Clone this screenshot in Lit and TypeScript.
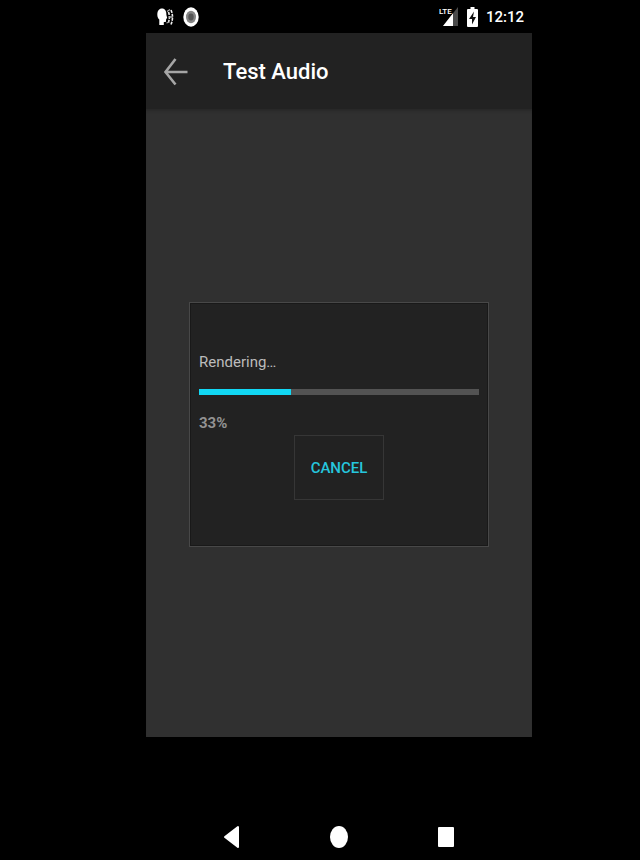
import { LitElement, html, css } from "lit";
import { customElement, state } from "lit/decorators.js";

@customElement("status-bar")
class StatusBar extends LitElement {
  static styles = css`
    :host {
      display: flex;
      align-items: center;
      justify-content: space-between;
      box-sizing: border-box;
      height: 33px;
      padding: 0 8px 0 11px;
      background: #000;
      color: #fff;
    }
    .group {
      display: flex;
      align-items: center;
      gap: 8px;
    }
    svg {
      display: block;
    }
    .lte {
      font: 500 8px "Roboto", sans-serif;
      fill: #fff;
    }
    .clock {
      font: 500 15px/20px "Roboto", sans-serif;
    }
  `;

  render() {
    return html`
      <div class="group">
        <svg width="18" height="20" viewBox="0 0 18 20" aria-label="Voice">
          <path fill="#fff" d="M5 1.500C2 1.500.3 4 .3 7.500c0 2.500.8 4 2 5V18h4.500v-3h2l.4-3 1-1-.8-3C9.500 4 8 1.500 5 1.500z" />
          <path fill="none" stroke="#eee" stroke-width="1.600" stroke-dasharray="3 1" d="M11.500 5q1.800 5 0 10M14 3q3 7 0 14.500" />
          <path fill="none" stroke="#aaa" stroke-width="1.300" d="M10 4.500l3-2M9.500 16l3-1M12 10h4" />
        </svg>
        <svg width="17" height="20" viewBox="0 0 17 20" aria-label="Recording">
          <ellipse cx="8" cy="10" rx="7.700" ry="9.700" fill="#fff" />
          <ellipse cx="8" cy="10" rx="5" ry="6.200" fill="#858585" />
          <ellipse cx="8" cy="10" rx="2.700" ry="3.400" fill="#555" />
        </svg>
      </div>
      <div class="group">
        <svg width="20" height="21" viewBox="0 0 20 21" aria-label="LTE signal">
          <path fill="#4a4a4a" d="M19 1v19H4z" />
          <path fill="#fff" d="M14 7.300V20H4z" />
          <path fill="#000" d="M0 0h13v9H0z" />
          <text class="lte" x="0" y="8">LTE</text>
        </svg>
        <svg width="11" height="20" viewBox="0 0 11 20" aria-label="Charging">
          <path fill="#fff" d="M3.500 0h4v2H10q1 0 1 1v16q0 1-1 1H1q-1 0-1-1V3q0-1 1-1h2.500z" />
          <path fill="#111" d="M7 4.500L2 12h3v5.500L9 10H6z" />
        </svg>
        <span class="clock">12:12</span>
      </div>
    `;
  }
}

@customElement("render-dialog")
class RenderDialog extends LitElement {
  @state() private percent = 33;

  static styles = css`
    :host {
      display: block;
      box-sizing: border-box;
      padding: 47px 9px 46px;
      background: #222;
      border: 1px solid #484848;
      box-shadow: inset 0 0 0 1px #191919;
      font-family: "Roboto", sans-serif;
    }
    .message {
      display: block;
      font-size: 15px;
      line-height: 24px;
      color: #bcbcbc;
    }
    .bar {
      display: block;
      appearance: none;
      width: 100%;
      height: 6px;
      margin: 15px 0 16px;
      border: 0;
      background: #535353;
    }
    .bar::-webkit-progress-bar {
      background: #535353;
    }
    .bar::-webkit-progress-value {
      background: #12d8f4;
    }
    .percent {
      font-size: 15px;
      line-height: 24px;
      font-weight: 700;
      color: #929292;
    }
    .cancel {
      display: block;
      height: 65px;
      margin: 0 auto;
      padding: 0 16px;
      background: #222;
      border: 1px solid #363636;
      color: #26c6dd;
      font: 500 15px/20px "Roboto", sans-serif;
      cursor: pointer;
    }
  `;

  render() {
    return html`
      <label class="message" for="progress">Rendering…</label>
      <progress class="bar" id="progress" max="100" .value=${this.percent}></progress>
      <div class="percent">${this.percent}%</div>
      <button class="cancel" type="button">CANCEL</button>
    `;
  }
}

@customElement("app-root")
class AppRoot extends LitElement {
  static styles = css`
    :host {
      display: grid;
      grid-template-columns: 146fr 386fr 108fr;
      min-height: 100vh;
      background: #000;
      font-family: "Roboto", sans-serif;
    }
    .phone {
      grid-column: 2;
      display: flex;
      flex-direction: column;
    }
    .appbar {
      display: flex;
      align-items: center;
      gap: 34px;
      box-sizing: border-box;
      height: 76px;
      padding: 1px 17px 0;
      background: #222;
    }
    .title {
      margin: 0;
      font-size: 22px;
      line-height: 32px;
      font-weight: 500;
      color: #fff;
    }
    button {
      padding: 0;
      border: 0;
      background: none;
      cursor: pointer;
    }
    svg {
      display: block;
    }
    .content {
      flex: 1;
      display: grid;
      align-items: center;
      padding: 3px 43px 0;
      background: #303030;
      box-shadow: inset 0 4px 3px -2px #282828;
    }
    .nav {
      display: flex;
      align-items: flex-end;
      justify-content: space-around;
      box-sizing: border-box;
      height: 123px;
      padding: 0 32px 11px;
    }
  `;

  render() {
    return html`
      <div class="phone">
        <status-bar></status-bar>
        <header class="appbar">
          <button type="button" aria-label="Back">
            <svg width="26" height="30" viewBox="0 0 26 30">
              <path d="M24.500 15H3M12.500 2L2.500 15l10 12.500" fill="none" stroke="#a6a6a6" stroke-width="2.600" />
            </svg>
          </button>
          <h1 class="title">Test Audio</h1>
        </header>
        <main class="content">
          <render-dialog role="dialog" aria-label="Rendering"></render-dialog>
        </main>
        <nav class="nav">
          <button type="button" aria-label="Back">
            <svg width="18" height="24" viewBox="0 0 18 24">
              <path d="M15 2v20L2 12z" fill="#fff" stroke="#fff" stroke-width="2" stroke-linejoin="round" />
            </svg>
          </button>
          <button type="button" aria-label="Home">
            <svg width="18" height="24" viewBox="0 0 18 24">
              <ellipse cx="9" cy="12" rx="9" ry="11" fill="#fff" />
            </svg>
          </button>
          <button type="button" aria-label="Recent apps">
            <svg width="18" height="24" viewBox="0 0 18 24">
              <rect x="1" y="2" width="16" height="20" rx="1" fill="#fff" />
            </svg>
          </button>
        </nav>
      </div>
    `;
  }
}
